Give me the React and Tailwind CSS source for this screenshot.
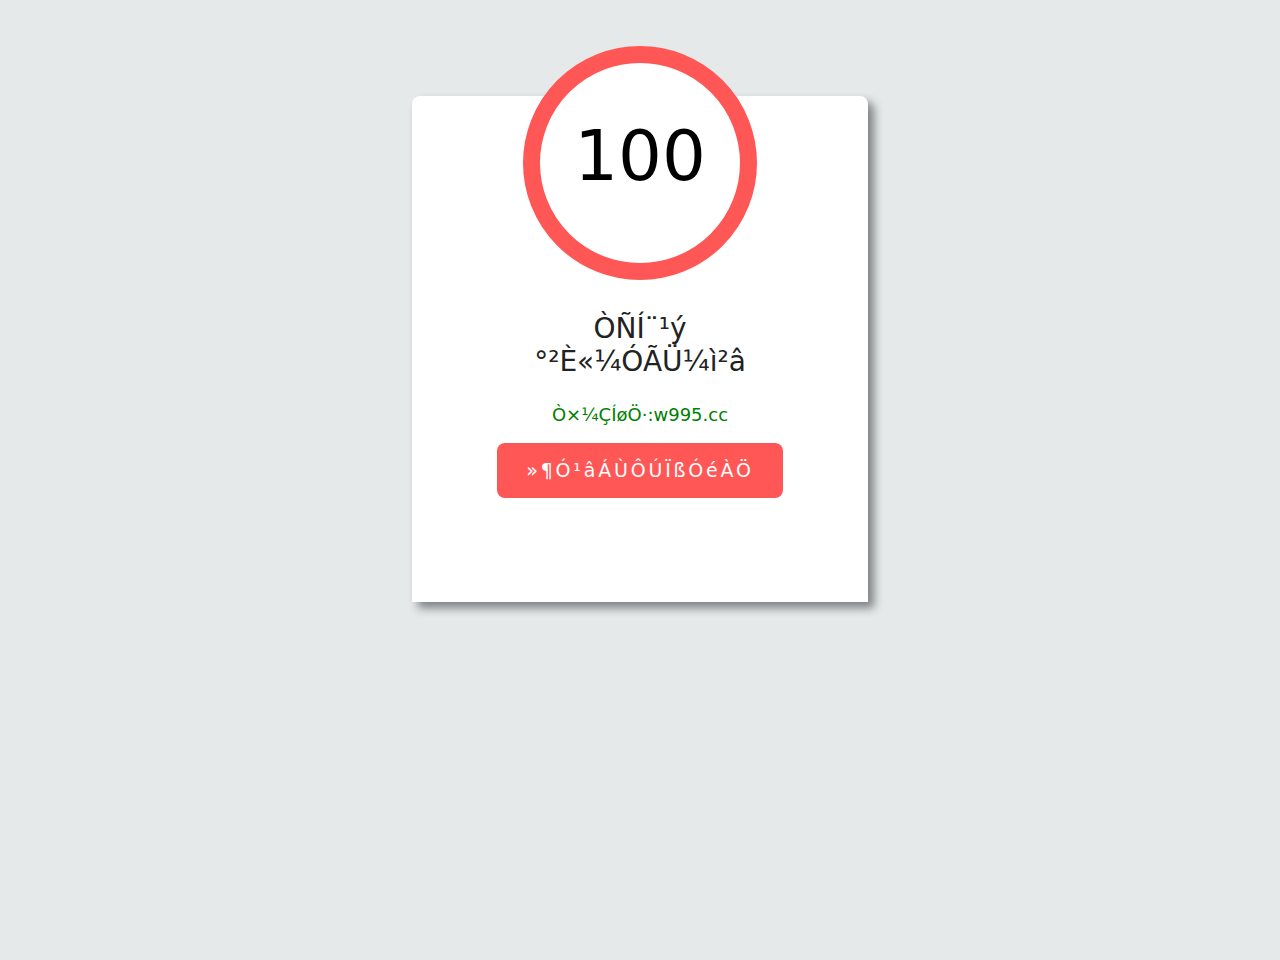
export default function App() {
  return (
    <div
      className="min-h-[960px] bg-[#e5e9ea] pt-[96px]"
      style={{ fontFamily: '"DejaVu Sans", sans-serif' }}
    >
      <div className="mx-auto flex h-[506px] w-[456px] flex-col items-center rounded-t-lg bg-white shadow-[6px_6px_10px_rgba(0,0,0,0.45)]">
        {/* Score ring */}
        <div className="-mt-[50px] flex h-[234px] w-[234px] items-center justify-center rounded-full border-[17px] border-[#ff5656] bg-white">
          <span className="-mt-[14px] text-[69px] leading-none text-black">100</span>
        </div>

        <h1 className="mt-[32px] text-center text-[28px] leading-[33px] text-[#222]">
          <span className="block">ÒÑÍ¨¹ý</span>
          <span className="block">°²È«¼ÓÃÜ¼ì²â</span>
        </h1>

        <p className="mt-[25px] text-[18px] leading-[24px] text-[#008000]">
          Ò×¼ÇÍøÖ·:w995.cc
        </p>

        <button className="mt-[16px] h-[55px] w-[286px] rounded-lg bg-[#ff5656] text-[19px] tracking-[2.8px] text-white">
          {"»¶Ó\u00AD¹âÁÙÔÚÏßÓéÀÖ"}
        </button>
      </div>
    </div>
  );
}
